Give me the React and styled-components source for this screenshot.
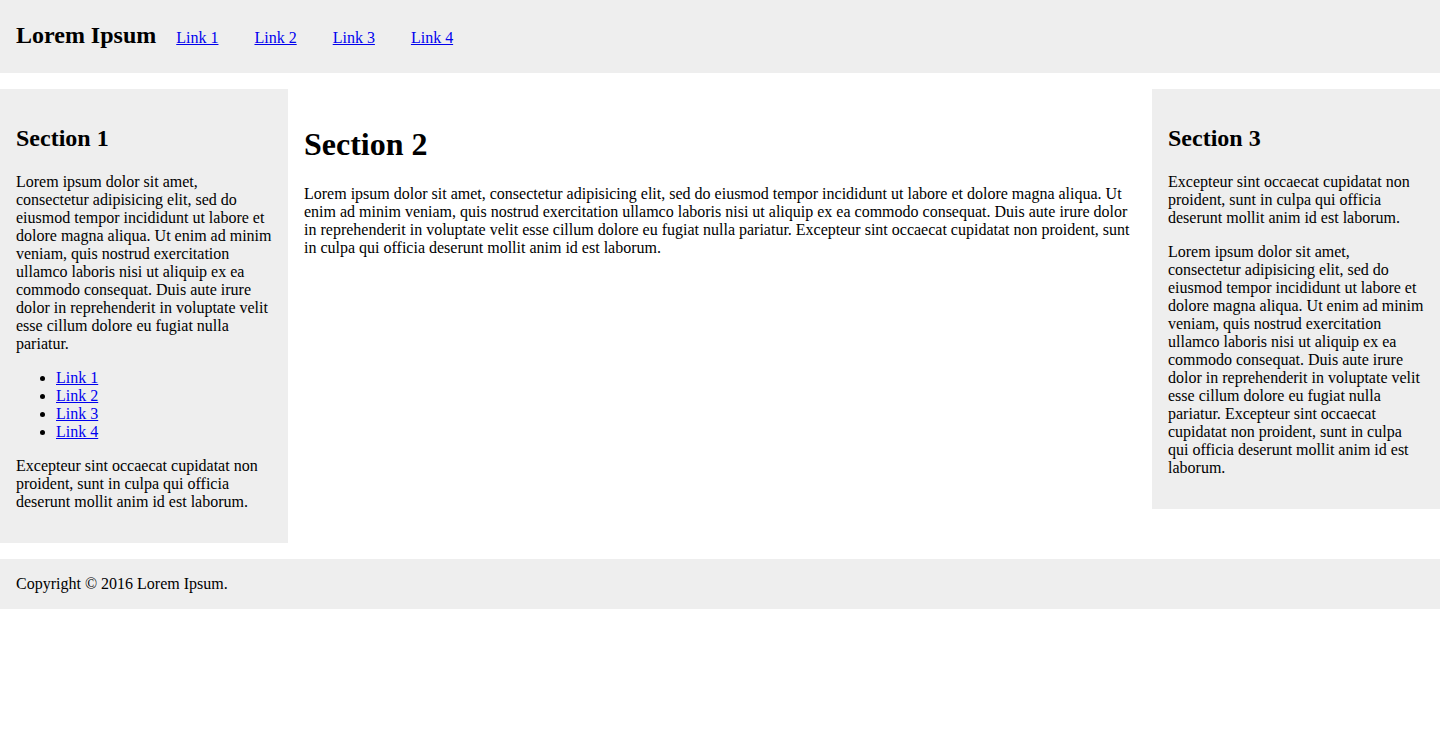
import React from "react";
import styled, { createGlobalStyle } from "styled-components";

const Global = createGlobalStyle`
  html, body { margin: 0; padding: 0; background: #fff; }
  body {
    font-family: "Liberation Serif", "Times New Roman", serif;
    font-size: 16px;
    color: #000;
  }
  a { color: #0000ee; }
`;

const Header = styled.header`
  background: #eee;
  height: 73px;
  box-sizing: border-box;
  padding: 0 16px 4px;
  display: flex;
  align-items: center;
  margin-bottom: 16px;
`;

const HeaderRow = styled.div`
  display: flex;
  align-items: baseline;
`;

const Brand = styled.h1`
  margin: 0 20px 0 0;
  font-size: 24px;
  font-weight: bold;
  line-height: 28px;
`;

const NavLinks = styled.nav`
  display: flex;
  gap: 36px;
  align-items: baseline;
`;

const NavLink = styled.a`
  font-size: 16px;
`;

const Main = styled.main`
  display: flex;
  align-items: flex-start;
`;

const Column = styled.section`
  box-sizing: border-box;
  width: ${(p) => p.$w};
  flex: 0 0 ${(p) => p.$w};
  padding: 16px;
  background: ${(p) => (p.$gray ? "#eee" : "transparent")};
`;

const SideTitle = styled.h2`
  font-size: 24px;
  margin: 20px 0 21px;
  line-height: 27px;
`;

const MainTitle = styled.h1`
  font-size: 32px;
  margin: 21px 0 23px;
  line-height: 36px;
`;

const Para = styled.p`
  margin: 16px 0;
  line-height: 18px;
`;

const List = styled.ul`
  margin: 16px 0;
  padding-left: 40px;
  line-height: 18px;
`;

const Footer = styled.footer`
  background: #eee;
  margin-top: 16px;
  padding: 16px;
  line-height: 18px;
`;

const lorem =
  "Lorem ipsum dolor sit amet, consectetur adipisicing elit, sed do eiusmod tempor incididunt ut labore et dolore magna aliqua. Ut enim ad minim veniam, quis nostrud exercitation ullamco laboris nisi ut aliquip ex ea commodo consequat. Duis aute irure dolor in reprehenderit in voluptate velit esse cillum dolore eu fugiat nulla pariatur.";
const except =
  "Excepteur sint occaecat cupidatat non proident, sunt in culpa qui officia deserunt mollit anim id est laborum.";

export default function App() {
  const links = ["Link 1", "Link 2", "Link 3", "Link 4"];
  return (
    <>
      <Global />
      <Header>
        <HeaderRow>
          <Brand>Lorem Ipsum</Brand>
          <NavLinks>
            {links.map((l) => (
              <NavLink key={l} href="#">
                {l}
              </NavLink>
            ))}
          </NavLinks>
        </HeaderRow>
      </Header>
      <Main>
        <Column $w="20%" $gray>
          <SideTitle>Section 1</SideTitle>
          <Para>{lorem}</Para>
          <List>
            {links.map((l) => (
              <li key={l}>
                <a href="#">{l}</a>
              </li>
            ))}
          </List>
          <Para>{except}</Para>
        </Column>
        <Column $w="60%">
          <MainTitle>Section 2</MainTitle>
          <Para>
            {lorem} {except}
          </Para>
        </Column>
        <Column $w="20%" $gray>
          <SideTitle>Section 3</SideTitle>
          <Para>{except}</Para>
          <Para>
            {lorem} {except}
          </Para>
        </Column>
      </Main>
      <Footer>Copyright © 2016 Lorem Ipsum.</Footer>
    </>
  );
}
